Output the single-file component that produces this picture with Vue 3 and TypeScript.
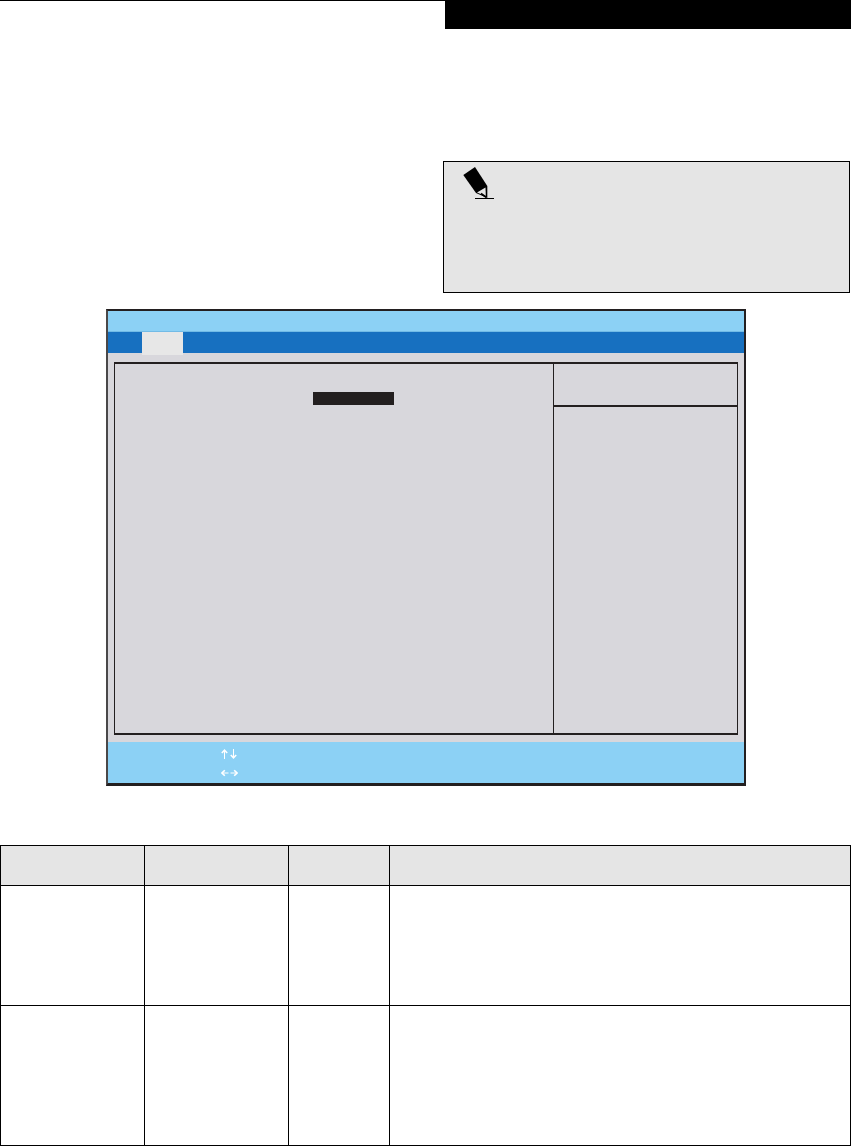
<script setup lang="ts">
// Scanned manual page: note box, BIOS setup screen and the option table.
// The source page carries no readable text, only the boxes.
const tableColumns = [144, 144, 101, 461]
const tableRows = [
  { id: 'head', height: 40, head: true },
  { id: 'first', height: 120, head: false },
  { id: 'second', height: 140, head: false },
]
</script>

<template>
  <div class="page">
    <header class="top">
      <div class="top-rule"></div>
      <div class="top-bar"></div>
    </header>

    <aside class="note">
      <svg class="pencil" width="32" height="33" viewBox="0 0 32 33">
        <path d="M0.3 8 L12 0 L24.3 19 L24.3 31 L13 26 Z" fill="#000" />
        <path d="M14 25.5 L22.5 20.5 L22.8 29 Z" fill="#e5e5e5" />
        <path d="M18 26.5 L23.5 30.5" stroke="#000" stroke-width="1.6" fill="none" />
        <path d="M12 31.5 L31 31.5" stroke="#000" stroke-width="1" fill="none" />
      </svg>
    </aside>

    <section class="bios">
      <div class="bios-title"></div>
      <nav class="bios-menu">
        <div class="bios-tab"></div>
      </nav>
      <div class="bios-body">
        <div class="bios-frame">
          <div class="bios-main">
            <div class="bios-field"></div>
          </div>
          <div class="bios-side">
            <div class="bios-side-head"></div>
          </div>
        </div>
      </div>
      <footer class="bios-foot">
        <svg class="keys" width="17" height="10" viewBox="0 0 17 10">
          <path class="shaft" d="M3.5 10 V1 M12.5 0 V9" />
          <path d="M0.8 4 L3.5 1.2 L6.2 4" />
          <path d="M9.8 6 L12.5 8.8 L15.2 6" />
        </svg>
        <svg class="keys" width="17" height="8" viewBox="0 0 17 8">
          <path class="shaft" d="M7.5 4 H1 M9.5 4 H16" />
          <path d="M3.8 1.2 L1 4 L3.8 6.8" />
          <path d="M13.2 1.2 L16 4 L13.2 6.8" />
        </svg>
      </footer>
    </section>

    <table class="options">
      <colgroup>
        <col v-for="(width, i) in tableColumns" :key="i" :style="{ width: width + 'px' }" />
      </colgroup>
      <tbody>
        <tr
          v-for="row in tableRows"
          :key="row.id"
          :class="{ head: row.head }"
          :style="{ height: row.height + 'px' }"
        >
          <td v-for="(_, i) in tableColumns" :key="i"></td>
        </tr>
      </tbody>
    </table>
  </div>
</template>

<style scoped>
.page {
  width: 852px;
  height: 1146px;
  display: flex;
  flex-direction: column;
  background: #fff;
  overflow: hidden;
}

.top {
  display: flex;
  height: 29px;
}

.top-rule {
  width: 445px;
  height: 1px;
  background: #000;
}

.top-bar {
  width: 406px;
  background: #000;
}

.note {
  box-sizing: border-box;
  width: 407px;
  height: 132px;
  margin: 132px 0 0 443px;
  padding: 5px 0 0 19px;
  background: #e5e5e5;
  border: 1px solid #000;
}

.pencil {
  display: block;
}

.bios {
  box-sizing: border-box;
  width: 640px;
  height: 477px;
  margin: 16px 0 0 106px;
  display: flex;
  flex-direction: column;
  background: #d8d7dc;
  border: 2px solid #231f20;
  border-left-color: #4a4849;
  border-bottom-width: 3px;
}

.bios-title {
  height: 21px;
  flex: none;
  background: #8cd1f5;
  border-bottom: 1px solid #72bbe6;
  box-sizing: border-box;
}

.bios-menu {
  height: 21px;
  flex: none;
  padding-left: 34px;
  background: #1770c0;
}

.bios-tab {
  width: 41px;
  height: 23px;
  background: #e7e7e7;
}

.bios-body {
  flex: 1;
  min-height: 0;
  padding: 9px 6px 7px 6px;
}

.bios-frame {
  box-sizing: border-box;
  height: 100%;
  display: flex;
  border: 1px solid #231f20;
  border-top-width: 2px;
  border-bottom-width: 2px;
}

.bios-main {
  width: 439px;
  flex: none;
  padding: 28px 0 0 198px;
  box-sizing: border-box;
  border-right: 1px solid #231f20;
}

.bios-field {
  width: 81px;
  height: 13px;
  background: #231f20;
}

.bios-side {
  flex: 1;
}

.bios-side-head {
  height: 41px;
  border-bottom: 2px solid #231f20;
}

.bios-foot {
  height: 41px;
  flex: none;
  box-sizing: border-box;
  padding: 7px 0 0 113px;
  display: flex;
  flex-direction: column;
  gap: 10px;
  background: #8cd1f5;
}

.keys {
  display: block;
  fill: none;
  stroke: #fff;
  stroke-width: 1.6;
}

.keys .shaft {
  stroke-width: 1;
}

.options {
  width: 851px;
  margin-top: 59px;
  border-collapse: collapse;
  table-layout: fixed;
}

.options td {
  padding: 0;
  border: 1px solid #000;
}

.options .head td {
  background: #e5e5e5;
}
</style>
